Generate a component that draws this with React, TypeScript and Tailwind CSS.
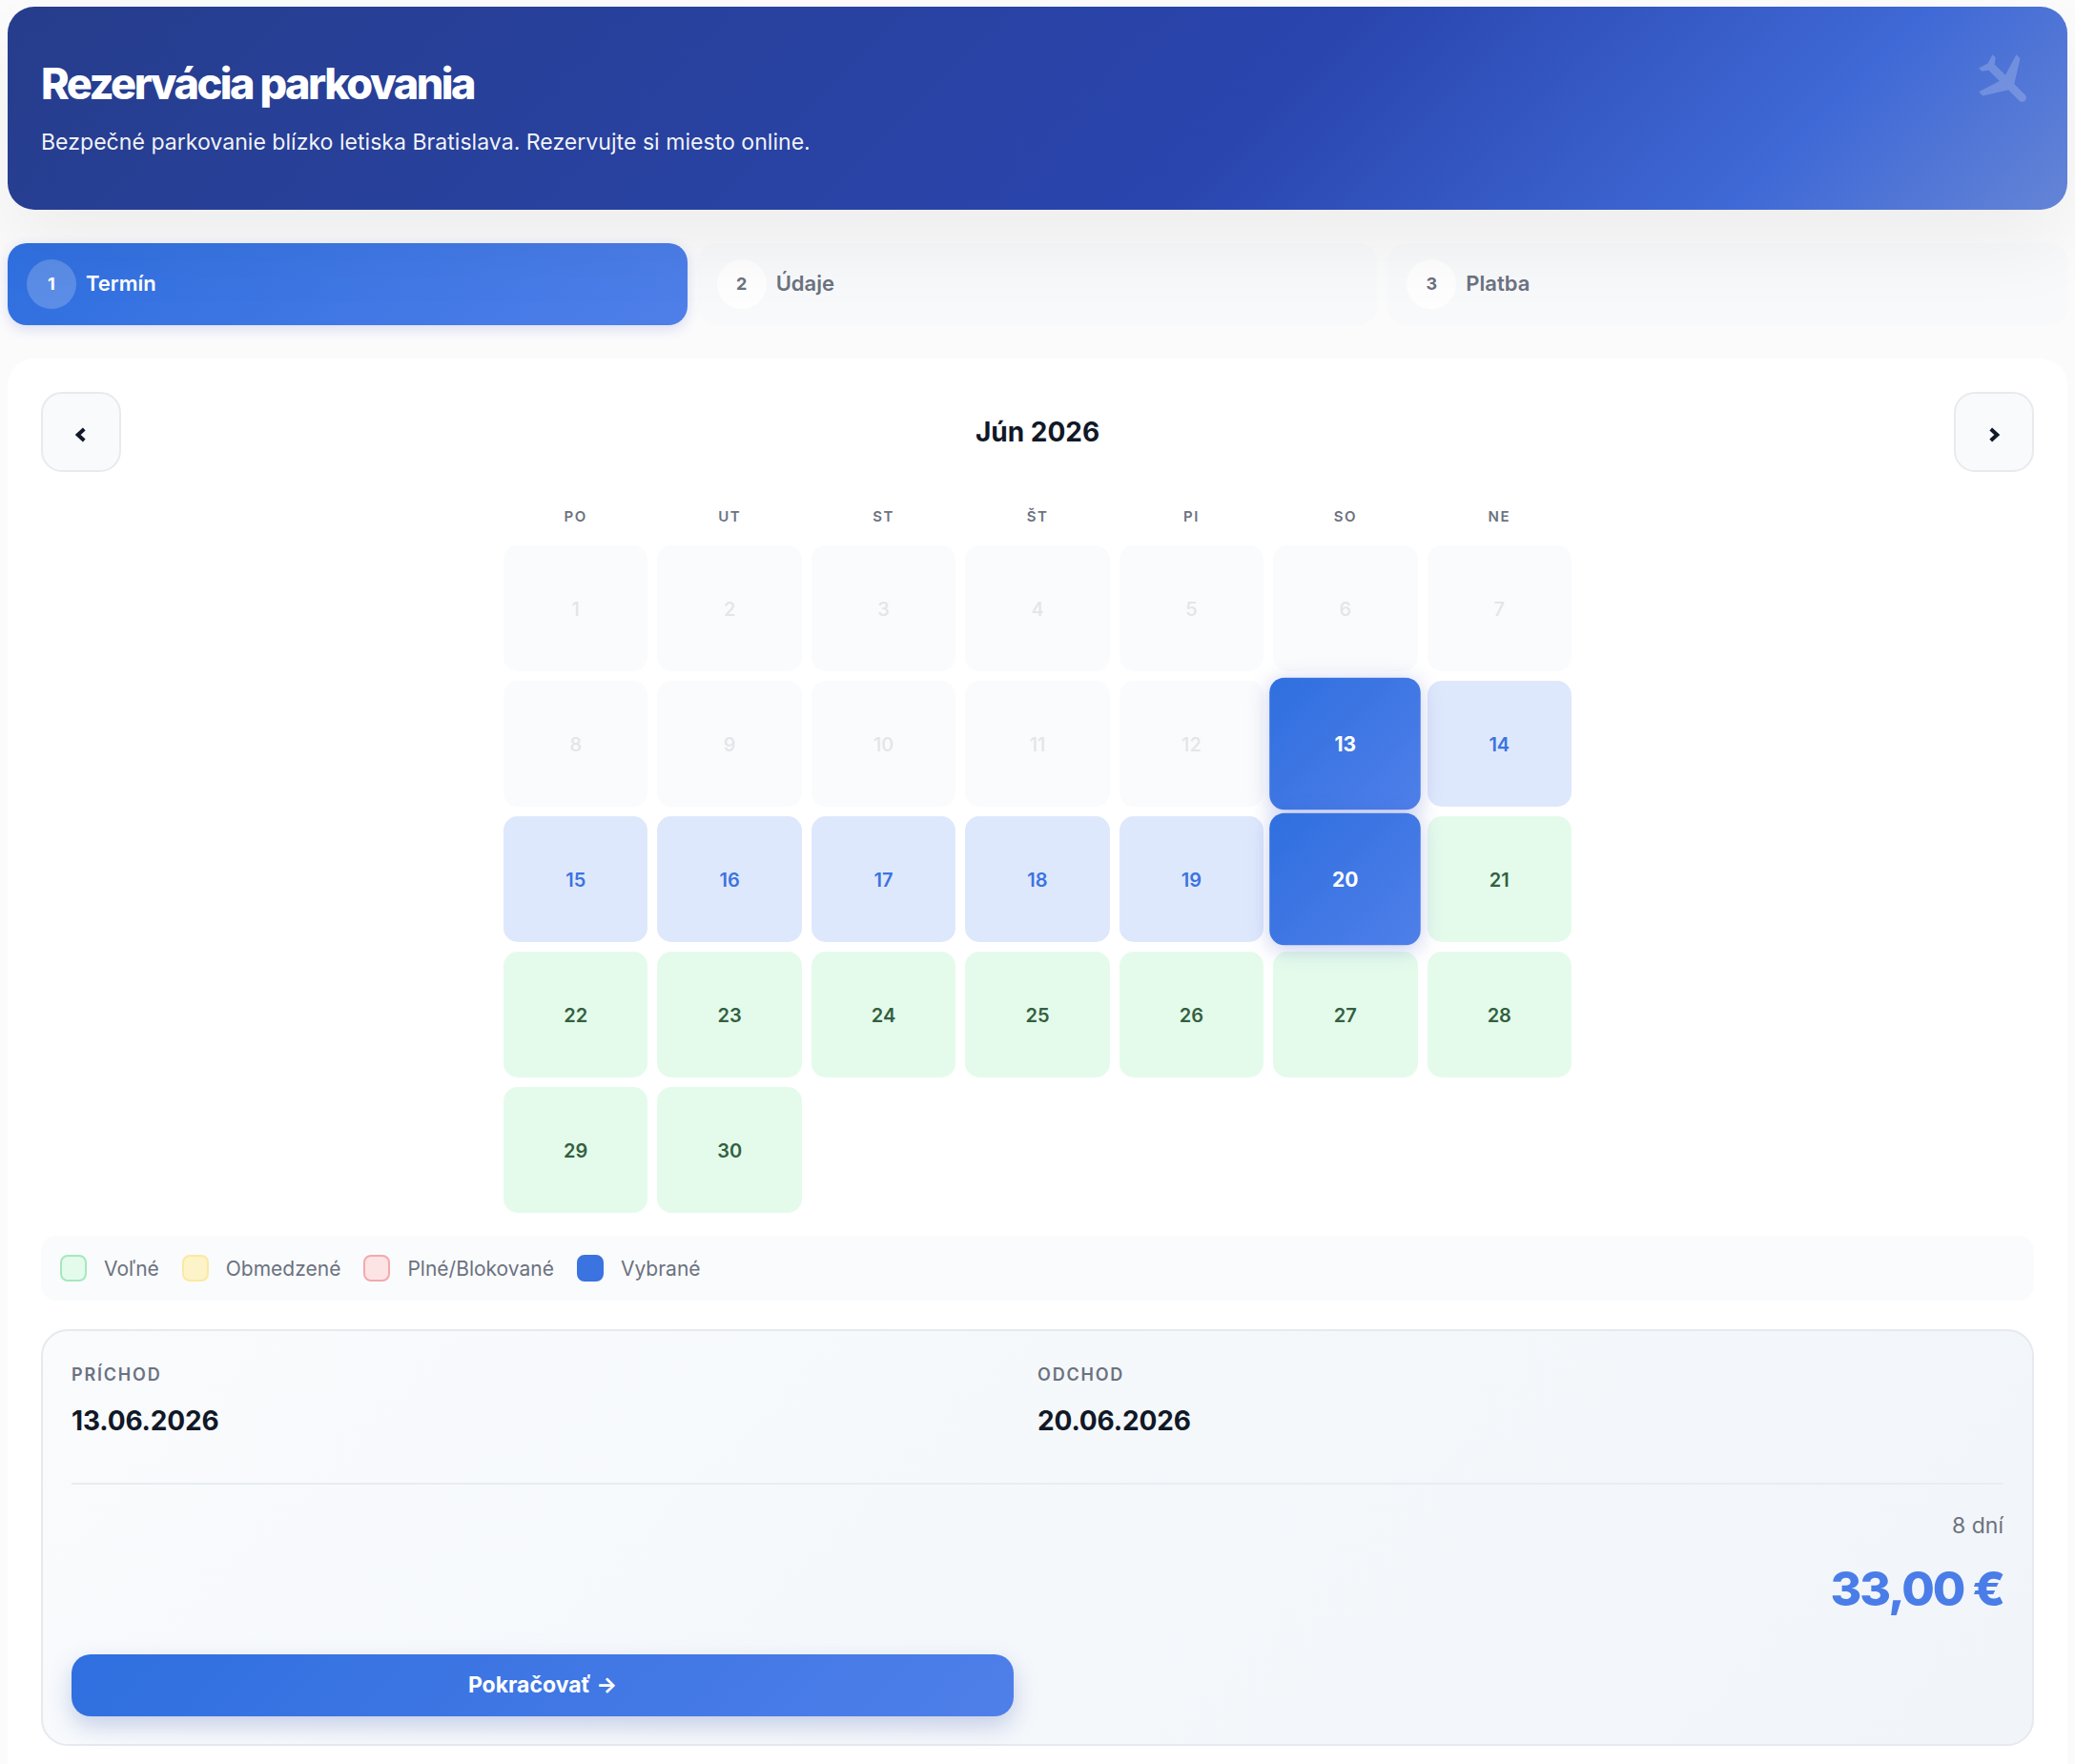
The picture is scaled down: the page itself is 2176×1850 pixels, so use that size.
const days = Array.from({ length: 30 }, (_, i) => i + 1);

function dayClass(d: number) {
  if (d <= 12) return "bg-[#fafbfc] text-[#e3e5e9] font-medium";
  if (d === 13 || d === 20)
    return "bg-[linear-gradient(135deg,#2f6fdf,#4f7fe9)] text-white font-bold scale-[1.05] z-10 shadow-[0_4px_20px_rgba(60,80,190,0.28)]";
  if (d < 20) return "bg-[#dee8fc] text-[#3b73e0] font-semibold";
  return "bg-[#e4fbeb] text-[#33603f] font-semibold";
}

const legend = [
  { label: "Voľné", cls: "bg-[#e4fbeb] border-2 border-[#a3e9bd]" },
  { label: "Obmedzené", cls: "bg-[#fdf3c9] border-2 border-[#fbe9a0]" },
  { label: "Plné/Blokované", cls: "bg-[#fce4e4] border-2 border-[#f3a9ae]" },
  { label: "Vybrané", cls: "bg-[#3b73e0] border-2 border-[#3b73e0]" },
];

const stepIdle = "flex h-[86px] items-center gap-[10px] rounded-[20px] bg-[#f0f2f5]/25 px-5 text-[#6b7280]";
const navBtn = "flex h-[84px] w-[84px] items-center justify-center rounded-[22px] border-2 border-[#e8eaee] bg-[#f8fafc] pt-[6px] text-[#111827]";

export default function App() {
  return (
    <div className="min-h-[1850px] bg-[#fbfbfc] px-2 pt-[7px] font-['Inter',sans-serif]">
      <header className="relative flex h-[213px] flex-col rounded-[28px] bg-[linear-gradient(135deg,#263d8c_0%,#2a45ae_60%,#3f69d6_85%,#6484d6_100%)] px-[35px] pt-[54px] text-white shadow-[0_40px_80px_rgba(0,0,0,0.055)]">
        <h1 className="text-[45px] leading-[54px] font-extrabold tracking-[-0.055em]">Rezervácia parkovania</h1>
        <p className="mt-[18px] text-[23.1px] leading-[32px] text-white/95">
          Bezpečné parkovanie blízko letiska Bratislava. Rezervujte si miesto online.
        </p>
        <svg viewBox="0 0 24 24" className="absolute top-[44px] right-[31px] h-[70px] w-[70px] rotate-[135deg] fill-white/20">
          <path d="M21 16v-2l-8-5V3.5c0-.83-.67-1.5-1.5-1.5S10 2.67 10 3.5V9l-8 5v2l8-2.5V19l-2 1.5V22l3.5-1 3.5 1v-1.5L13 19v-5.5l8 2.5z" />
        </svg>
      </header>

      <nav className="mt-[35px] grid grid-cols-3 gap-[11px]">
        <div className="flex h-[86px] items-center gap-[10px] rounded-[20px] bg-[linear-gradient(135deg,#2f6fdf,#4f7fe9)] px-5 text-white shadow-[0_4px_14px_rgba(60,80,190,0.18)]">
          <span className="flex h-[52px] w-[52px] items-center justify-center rounded-full bg-white/20 pb-[2px] text-[18px] font-bold">1</span>
          <span className="pb-[2px] text-[22px] font-semibold">Termín</span>
        </div>
        <div className={stepIdle}>
          <span className="flex h-[52px] w-[52px] items-center justify-center rounded-full bg-white/80 pb-[2px] text-[18px] font-bold">2</span>
          <span className="pb-[2px] text-[22px] font-semibold">Údaje</span>
        </div>
        <div className={stepIdle}>
          <span className="flex h-[52px] w-[52px] items-center justify-center rounded-full bg-white/80 pb-[2px] text-[18px] font-bold">3</span>
          <span className="pb-[2px] text-[22px] font-semibold">Platba</span>
        </div>
      </nav>

      <main className="mt-[35px] rounded-t-[28px] bg-white px-[35px] pt-[35px] pb-[20px]">
        <div className="flex items-center justify-between">
          <button className={navBtn}>
            <svg viewBox="0 0 11 14" className="h-[16px] w-[12px] fill-none stroke-current stroke-[3.6]"><path d="M8.5 1.5L2.5 7l6 5.5" /></svg>
          </button>
          <h2 className="text-[28px] font-bold text-[#111827]">Jún 2026</h2>
          <button className={navBtn}>
            <svg viewBox="0 0 11 14" className="h-[16px] w-[12px] fill-none stroke-current stroke-[3.6]"><path d="M2.5 1.5L8.5 7l-6 5.5" /></svg>
          </button>
        </div>

        <div className="mx-auto mt-[35px] w-[1120px]">
          <div className="grid grid-cols-7 gap-x-[10px] pb-[20px]">
            {["PO", "UT", "ST", "ŠT", "PI", "SO", "NE"].map((d) => (
              <div key={d} className="pt-px text-center text-[15px] leading-[21px] font-semibold tracking-[0.1em] text-[#6b7280]">{d}</div>
            ))}
          </div>
          <div className="grid grid-cols-7 gap-[10px]">
            {days.map((d) => (
              <div key={d} className={`flex h-[132px] items-center justify-center rounded-[15px] pt-[2px] text-[20px] ${dayClass(d)}`}>{d}</div>
            ))}
          </div>
        </div>

        <div className="mt-[24px] flex h-[68px] items-center gap-[24px] rounded-[16px] bg-[#fafbfc] px-5">
          {legend.map((l) => (
            <div key={l.label} className="flex items-center gap-[18px]">
              <span className={`h-[28px] w-[28px] rounded-[8px] ${l.cls}`} />
              <span className="pt-[2px] text-[21px] text-[#6b7280]">{l.label}</span>
            </div>
          ))}
        </div>

        <section className="mt-[30px] h-[437px] rounded-[28px] border-2 border-[#e6e9ee] bg-[linear-gradient(135deg,#f9fbfd,#f1f5f9)] px-[30px] pt-[34px]">
          <div className="grid grid-cols-2 border-b-2 border-[#e9ecf0] pb-[47px]">
            <div>
              <div className="text-[18px] leading-[24px] font-semibold tracking-[0.1em] text-[#6b7280]">PRÍCHOD</div>
              <div className="mt-[18px] text-[28px] leading-[36px] font-bold tracking-[-0.005em] text-[#111827]">13.06.2026</div>
            </div>
            <div>
              <div className="text-[18px] leading-[24px] font-semibold tracking-[0.1em] text-[#6b7280]">ODCHOD</div>
              <div className="mt-[18px] text-[28px] leading-[36px] font-bold tracking-[-0.005em] text-[#111827]">20.06.2026</div>
            </div>
          </div>
          <div className="mt-[27px] text-right text-[23px] leading-[32px] text-[#6b7280]">8 dní</div>
          <div className="mt-[21px] text-right text-[50px] leading-[58px] font-extrabold tracking-[-0.04em] text-[#4a7de8]">33,00 €</div>
          <button className="mt-[40px] flex h-[65px] w-[988px] items-center justify-center rounded-[20px] bg-[linear-gradient(135deg,#2f6fdf,#4f7fe9)] text-[23px] font-bold text-white shadow-[0_10px_25px_rgba(50,80,170,0.25)]">
            Pokračovať →
          </button>
        </section>
      </main>
    </div>
  );
}
